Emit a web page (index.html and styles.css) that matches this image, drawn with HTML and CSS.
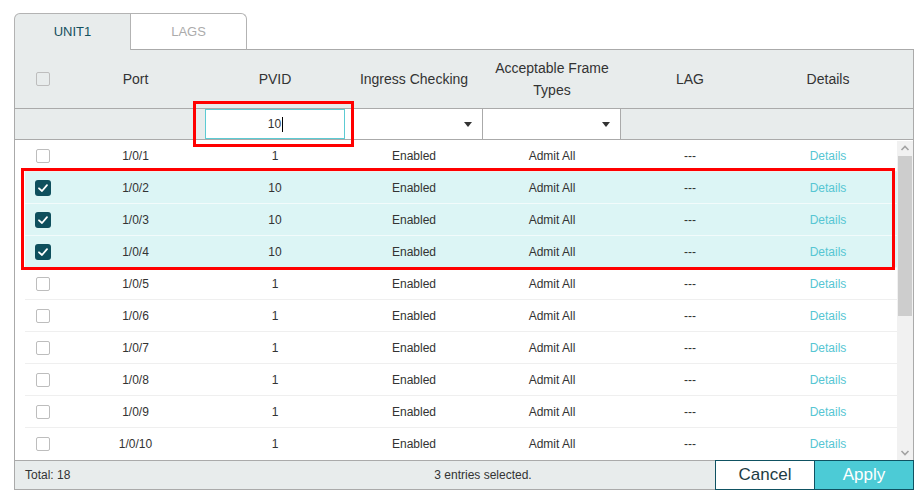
FILE: index.html
```html
<!DOCTYPE html>
<html>
<head>
<meta charset="utf-8">
<link rel="stylesheet" href="styles.css">
</head>
<body>
<div class="panel">
  <div class="tabs">
    <div class="tab tab-active">UNIT1</div>
    <div class="tab tab-off">LAGS</div>
    <div class="tab-fill"></div>
  </div>
  <div class="table">
    <div class="thead">
      <div class="th th-chk"><span class="cb"></span></div>
      <div class="th">Port</div>
      <div class="th">PVID</div>
      <div class="th">Ingress Checking</div>
      <div class="th">Acceptable Frame Types</div>
      <div class="th">LAG</div>
      <div class="th">Details</div>
      <div class="th"></div>
    </div>
    <div class="filter">
      <div class="fcell"></div>
      <div class="fcell"></div>
      <div class="finput">10<span class="caret"></span></div>
      <div class="fselect"><span class="tri"></span></div>
      <div class="fselect"><span class="tri"></span></div>
      <div class="fcell"></div>
      <div class="fcell"></div>
      <div class="fcell"></div>
    </div>
    <div class="tbody">
      <div class="rows">
        <div class="row"><div class="td-chk"><span class="cb"></span></div><div>1/0/1</div><div>1</div><div>Enabled</div><div>Admit All</div><div>---</div><div class="link">Details</div></div>
        <div class="row sel"><div class="td-chk"><span class="cb on"><svg viewBox="0 0 16 16" width="16" height="16"><polyline points="4,8.3 7,11 12,5.2" fill="none" stroke="#fff" stroke-width="1.8" stroke-linecap="round" stroke-linejoin="round"/></svg></span></div><div>1/0/2</div><div>10</div><div>Enabled</div><div>Admit All</div><div>---</div><div class="link">Details</div></div>
        <div class="row sel"><div class="td-chk"><span class="cb on"><svg viewBox="0 0 16 16" width="16" height="16"><polyline points="4,8.3 7,11 12,5.2" fill="none" stroke="#fff" stroke-width="1.8" stroke-linecap="round" stroke-linejoin="round"/></svg></span></div><div>1/0/3</div><div>10</div><div>Enabled</div><div>Admit All</div><div>---</div><div class="link">Details</div></div>
        <div class="row sel"><div class="td-chk"><span class="cb on"><svg viewBox="0 0 16 16" width="16" height="16"><polyline points="4,8.3 7,11 12,5.2" fill="none" stroke="#fff" stroke-width="1.8" stroke-linecap="round" stroke-linejoin="round"/></svg></span></div><div>1/0/4</div><div>10</div><div>Enabled</div><div>Admit All</div><div>---</div><div class="link">Details</div></div>
        <div class="row"><div class="td-chk"><span class="cb"></span></div><div>1/0/5</div><div>1</div><div>Enabled</div><div>Admit All</div><div>---</div><div class="link">Details</div></div>
        <div class="row"><div class="td-chk"><span class="cb"></span></div><div>1/0/6</div><div>1</div><div>Enabled</div><div>Admit All</div><div>---</div><div class="link">Details</div></div>
        <div class="row"><div class="td-chk"><span class="cb"></span></div><div>1/0/7</div><div>1</div><div>Enabled</div><div>Admit All</div><div>---</div><div class="link">Details</div></div>
        <div class="row"><div class="td-chk"><span class="cb"></span></div><div>1/0/8</div><div>1</div><div>Enabled</div><div>Admit All</div><div>---</div><div class="link">Details</div></div>
        <div class="row"><div class="td-chk"><span class="cb"></span></div><div>1/0/9</div><div>1</div><div>Enabled</div><div>Admit All</div><div>---</div><div class="link">Details</div></div>
        <div class="row"><div class="td-chk"><span class="cb"></span></div><div>1/0/10</div><div>1</div><div>Enabled</div><div>Admit All</div><div>---</div><div class="link">Details</div></div>
      </div>
      <div class="scrollbar">
        <div class="sb-btn"><svg viewBox="0 0 16 15" width="16" height="15"><polyline points="4.5,9 8,5.5 11.5,9" fill="none" stroke="#a3a3a3" stroke-width="1.6"/></svg></div>
        <div class="sb-thumb"></div>
        <div class="sb-track"></div>
        <div class="sb-btn"><svg viewBox="0 0 16 15" width="16" height="15"><polyline points="4.5,6 8,9.5 11.5,6" fill="none" stroke="#a3a3a3" stroke-width="1.6"/></svg></div>
      </div>
    </div>
  </div>
  <div class="footer">
    <div class="foot-info">
      <span class="total">Total: 18</span>
      <span class="selected">3 entries selected.</span>
    </div>
    <button class="btn btn-cancel">Cancel</button>
    <button class="btn btn-apply">Apply</button>
  </div>
  <div class="mark mark-input"></div>
  <div class="mark mark-rows"></div>
</div>
</body>
</html>
```
FILE: styles.css
```css
* { box-sizing: border-box; }
body {
  margin: 0;
  background: #fff;
  font-family: "Liberation Sans", Arial, sans-serif;
  color: #333;
}
.panel {
  position: relative;
  width: 900px;
  margin: 13px 0 0 14px;
}
.tabs {
  display: flex;
  height: 37px;
}
.tab {
  display: flex;
  align-items: center;
  justify-content: center;
  font-size: 13px;
  padding-bottom: 1px;
}
.tab-active {
  width: 117px;
  background: #e8ecec;
  border: 1px solid #b3b3b3;
  border-bottom: none;
  border-radius: 6px 0 0 0;
  color: #14505e;
}
.tab-off {
  width: 116px;
  background: #fff;
  border-top: 1px solid #b3b3b3;
  border-right: 1px solid #b3b3b3;
  border-bottom: 1px solid #aaa;
  border-radius: 0 6px 0 0;
  color: #ababab;
}
.tab-fill {
  flex: 1;
  border-bottom: 1px solid #aaa;
}
.table {
  border-left: 1px solid #aaa;
  border-right: 1px solid #aaa;
}
.thead, .filter {
  display: grid;
  grid-template-columns: 51px 139px 140px 138px 138px 138px 138px 16px;
  background: #e8ecec;
  border-bottom: 1px solid #aaa;
}
.thead { height: 59px; }
.th {
  display: flex;
  align-items: center;
  justify-content: center;
  text-align: center;
  font-size: 14px;
  line-height: 22px;
  color: #333;
  padding: 0 8px;
}
.th-chk {
  justify-content: flex-start;
  padding-left: 21px;
}
.cb {
  display: block;
  width: 14px;
  height: 14px;
  border: 1px solid #bdbdbd;
  border-radius: 2px;
  background: #fff;
}
.th .cb { background: transparent; }
.cb.on {
  width: 16px;
  height: 16px;
  margin-left: -1px;
  border: none;
  border-radius: 3px;
  background: #0e4f5d;
}
.cb svg { display: block; }
.filter { height: 31px; }
.finput {
  background: #fff;
  border: 1px solid #5ccbd3;
  display: flex;
  align-items: center;
  justify-content: center;
  font-size: 12px;
  color: #333;
  padding-left: 1px;
}
.caret {
  display: inline-block;
  width: 1px;
  height: 15px;
  background: #000;
  margin-left: 1px;
}
.fselect {
  background: #fff;
  border-right: 1px solid #aaa;
  display: flex;
  align-items: center;
  justify-content: flex-end;
  padding-right: 10px;
}
.tri {
  width: 0;
  height: 0;
  border-left: 4px solid transparent;
  border-right: 4px solid transparent;
  border-top: 5px solid #333;
}
.tbody {
  display: flex;
  height: 320px;
}
.rows {
  width: 882px;
  padding-left: 10px;
}
.row {
  display: grid;
  grid-template-columns: 41px 139px 140px 138px 138px 138px 138px;
  height: 32px;
  border-bottom: 1px solid #efefef;
  font-size: 12px;
  color: #333;
}
.row:last-child { border-bottom: none; }
.row > div {
  display: flex;
  align-items: center;
  justify-content: center;
}
.row > .td-chk {
  justify-content: flex-start;
  padding-left: 11px;
}
.row.sel {
  background: #dcf5f5;
  border-bottom-color: #f2fbfb;
}
.row > .link { color: #56c6d3; }
.scrollbar {
  width: 16px;
  margin-top: 1px;
  display: flex;
  flex-direction: column;
  background: #f1f1f1;
}
.sb-btn { height: 15px; }
.sb-btn svg { display: block; }
.sb-thumb {
  height: 160px;
  margin: 0 1px;
  background: #cdcdcd;
}
.sb-track { flex: 1; }
.footer {
  display: flex;
  height: 30px;
}
.foot-info {
  flex: 1;
  display: flex;
  align-items: center;
  background: #e8ecec;
  border: 1px solid #aaa;
  border-right: none;
  font-size: 12px;
  color: #333;
}
.total {
  width: 200px;
  padding-left: 10px;
}
.selected {
  flex: 1;
  text-align: center;
  padding-left: 36px;
}
.btn {
  font-family: "Liberation Sans", Arial, sans-serif;
  font-size: 17px;
  height: 30px;
  border: 1px solid #0f5262;
  padding: 0;
  margin: 0;
  cursor: pointer;
}
.btn-cancel {
  width: 99px;
  border-right: none;
  background: #fff;
  color: #1d3c44;
}
.btn-apply {
  width: 100px;
  background: #4ccbd6;
  color: #fff;
}
.mark {
  position: absolute;
  border: 3px solid #ff0000;
  pointer-events: none;
}
.mark-input {
  left: 179px;
  top: 88px;
  width: 161px;
  height: 46px;
}
.mark-rows {
  left: 7px;
  top: 155px;
  width: 874px;
  height: 102px;
}
```
